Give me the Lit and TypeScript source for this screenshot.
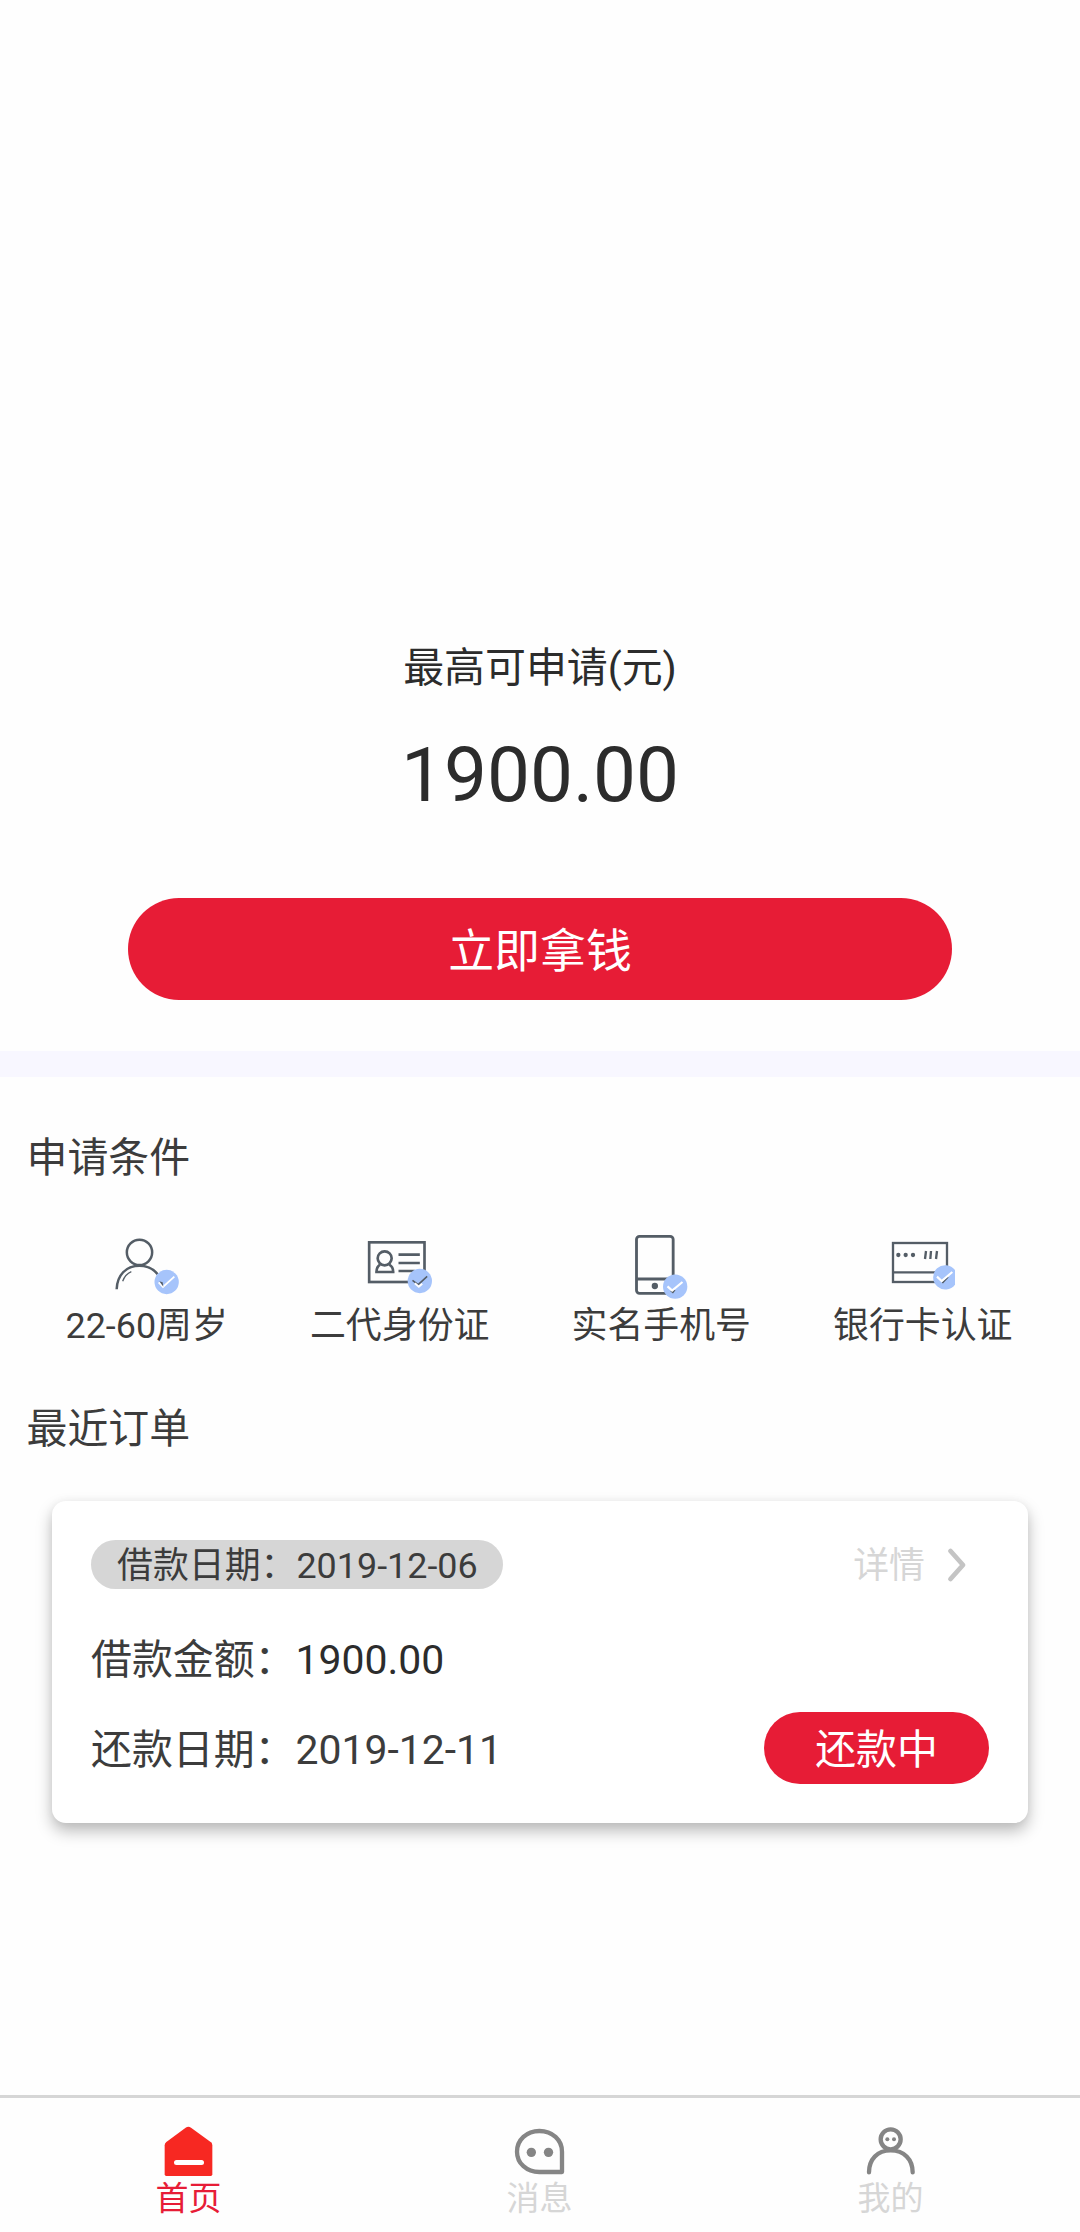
import { LitElement, html, svg, css, TemplateResult, SVGTemplateResult } from "lit";
import { customElement } from "lit/decorators.js";

const badge = (cx: number, cy: number) => svg`<circle cx=${cx} cy=${cy} r="36.5" fill="#a6c4fb"/>`;

interface Condition { label: string; box: string; art: SVGTemplateResult; }

const conditions: Condition[] = [
  {
    label: "22-60周岁",
    box: "21 30 240 210",
    art: svg`
      <g fill="none" stroke="#545d66" stroke-width="7.500">
        <circle cx="118.500" cy="97" r="38"/>
        <path d="M50 208C51 166 78 137 118 137C142 137 161 147 173 163"/>
        <path d="M68 184C73 170 82 160 94 155" stroke-width="4"/>
      </g>
      ${badge(200, 186)}
      <path d="M176 187L189 201L223 170" fill="none" stroke="#fff" stroke-width="5.500"/>
      <path d="M178 184L188 187L190 200Z" fill="#545d66"/>`,
  },
  {
    label: "二代身份证",
    box: "27.5 30 240 210",
    art: svg`
      <g fill="none" stroke="#545d66" stroke-width="8">
        <rect x="55" y="67" width="166" height="119"/>
        <circle cx="101.500" cy="115" r="21"/>
        <path d="M88 134C81 138 77 143 77 156H127C127 143 123 138 115 134"/>
        <path d="M143 104H207M143 129H207M143 153H192"/>
      </g>
      ${badge(207, 183)}
      <path d="M185 181L202 194L229 169" fill="none" stroke="#545d66" stroke-width="4.500"/>
      <path d="M192 190L204 200L214 191" fill="none" stroke="#fff" stroke-width="6"/>`,
  },
  {
    label: "实名手机号",
    box: "33.5 30 240 210",
    art: svg`
      <g fill="none" stroke="#545d66" stroke-width="8.500">
        <rect x="80" y="49" width="110" height="171" rx="9"/>
        <path d="M80 177H190"/>
      </g>
      <circle cx="135" cy="198" r="9.500" fill="#545d66"/>
      ${badge(196, 200)}
      <path d="M183 212L189 217L195 209" fill="none" stroke="#545d66" stroke-width="5"/>
      <path d="M173 199L187 212L218 186" fill="none" stroke="#fff" stroke-width="6.500"/>`,
  },
  {
    label: "银行卡认证",
    box: "39 30 240 210",
    art: svg`
      <g fill="none" stroke="#545d66" stroke-width="7">
        <rect x="69" y="69" width="162" height="117"/>
        <path d="M69 157H231"/>
        <path d="M168 93L165 117M183 93L181 117M201 93L198 117" stroke-width="7"/>
      </g>
      <g fill="#545d66"><circle cx="85" cy="105" r="6.500"/><circle cx="107" cy="105" r="6.500"/><circle cx="129" cy="105" r="6.500"/></g>
      <path d="M255 150A36.500 36.500 0 1 0 255 194Z" fill="#a6c4fb"/>
      <path d="M217 189L234 171" fill="none" stroke="#545d66" stroke-width="5"/>
      <path d="M201 170L215 183L247 156" fill="none" stroke="#fff" stroke-width="6.500"/>`,
  },
];

interface Tab { label: string; box: string; active: boolean; art: SVGTemplateResult; }

const tabs: Tab[] = [
  {
    label: "首页",
    box: "477 132 180 162",
    active: true,
    art: svg`
      <path d="M494 196Q494 190 499 186L557 143Q565 138 573 143L633 187Q637 190 637 196V283Q637 288 632 288H499Q494 288 494 283Z" fill="#f72822"/>
      <path d="M529.500 247.500H604.500" stroke="#fff" stroke-width="15" stroke-linecap="round"/>`,
  },
  {
    label: "消息",
    box: "150 132 180 162",
    active: false,
    art: svg`
      <path d="M238 153C277 153 306 180 306 215V276H238C200 276 171 250 171 215C171 180 200 153 238 153Z" fill="none" stroke="#858585" stroke-width="13" stroke-linejoin="round"/>
      <circle cx="214" cy="217" r="14" fill="#858585"/><circle cx="265.500" cy="217" r="14" fill="#858585"/>`,
  },
  {
    label: "我的",
    box: "1201 132 180 162",
    active: false,
    art: svg`
      <g fill="none" stroke="#858585" stroke-width="13" stroke-linecap="round">
        <circle cx="1290" cy="178" r="30"/>
        <path d="M1225 277C1225 238 1250 211 1290 211C1330 211 1356 238 1356 277"/>
      </g>
      <circle cx="1280" cy="178" r="6" fill="#858585"/><circle cx="1300" cy="178" r="6" fill="#858585"/>`,
  },
];

@customElement("app-root")
export class AppRoot extends LitElement {
  static styles = css`
    :host {
      display: flex;
      flex-direction: column;
      box-sizing: border-box;
      width: 1080px;
      height: 2232px;
      background: #fefefe;
      color: #3c3c3c;
      font-family: Roboto, "Noto Sans CJK SC", sans-serif;
      font-size: 40.9px;
      line-height: 60px;
      white-space: nowrap;
    }
    .hero {
      box-sizing: border-box;
      height: 1051px;
      padding-top: 638px;
      display: flex;
      flex-direction: column;
      align-items: center;
      flex: none;
      color: #2c2c2c;
    }
    .amount { margin-top: 32px; font-size: 76.5px; line-height: 90px; }
    .apply {
      margin-top: 78px;
      width: 824px;
      height: 102px;
      border-radius: 51px;
      background: #e71c36;
      color: #fff;
      font-size: 45.9px;
      line-height: 106px;
      text-align: center;
    }
    .band { flex: none; height: 26px; background: #f8f7ff; }
    .heading { padding-left: 26.5px; margin-top: 51px; }
    .conditions {
      display: flex;
      justify-content: space-between;
      padding: 0 67.5px 0 65.5px;
      margin-top: 42px;
    }
    .condition { display: flex; flex-direction: column; align-items: center; font-size: 35.9px; line-height: 50px; }
    .condition svg { width: 80px; height: 70px; display: block; margin-bottom: 1px; }
    .heading.orders { margin-top: 48px; }
    .card {
      box-sizing: border-box;
      margin: 42px 52px 0;
      height: 322px;
      padding: 39px 39px 38px;
      border-radius: 14px;
      background: #fff;
      box-shadow: 0 8px 16px rgba(0, 0, 0, 0.27), 0 0 10px rgba(0, 0, 0, 0.04);
    }
    .row { display: flex; align-items: center; justify-content: space-between; }
    .pill {
      height: 49px;
      padding: 0 25.5px 0 26px;
      border-radius: 25px;
      background: #d6d6d6;
      font-size: 35.9px;
      line-height: 53px;
    }
    .detail { display: flex; align-items: center; height: 49px; font-size: 35.9px; color: #d6d6d6; margin-right: 22px; }
    .detail span { padding-top: 4px; line-height: 49px; }
    .detail svg { width: 20px; height: 36px; margin-left: 22px; }
    .sum { margin-top: 41px; }
    .value { color: #2c2c2c; }
    .due { margin-top: 22px; }
    .date { padding-top: 3px; }
    .status {
      width: 225px;
      height: 72px;
      border-radius: 36px;
      background: #e71c36;
      color: #fff;
      line-height: 76px;
      text-align: center;
    }
    .tabs {
      box-sizing: border-box;
      margin-top: auto;
      height: 137px;
      padding: 26px 14px 0 13px;
      border-top: 3px solid #d6d6d6;
      display: flex;
    }
    .tab { flex: 1; display: flex; flex-direction: column; align-items: center; font-size: 33px; line-height: 42px; color: #d6d6d6; }
    .tab svg { width: 60px; height: 54px; display: block; }
    .tab.active { color: #e71c36; }
  `;

  render(): TemplateResult {
    return html`
      <section class="hero">
        <div>最高可申请(元)</div>
        <div class="amount">1900.00</div>
        <div class="apply">立即拿钱</div>
      </section>
      <div class="band"></div>
      <div class="heading">申请条件</div>
      <div class="conditions">
        ${conditions.map((c) => html`
          <div class="condition">
            <svg viewBox=${c.box}>${c.art}</svg>
            <span>${c.label}</span>
          </div>`)}
      </div>
      <div class="heading orders">最近订单</div>
      <section class="card">
        <div class="row">
          <div class="pill">借款日期：2019-12-06</div>
          <div class="detail">
            <span>详情</span>
            <svg viewBox="0 0 20 36"><path d="M3.500 4L16 18L3.500 32" fill="none" stroke="#c4c4c4" stroke-width="4.800" stroke-linecap="round" stroke-linejoin="round"/></svg>
          </div>
        </div>
        <div class="sum">借款金额：<span class="value">1900.00</span></div>
        <div class="row due">
          <span class="date">还款日期：2019-12-11</span>
          <div class="status">还款中</div>
        </div>
      </section>
      <nav class="tabs">
        ${tabs.map((t) => html`
          <div class="tab ${t.active ? "active" : ""}">
            <svg viewBox=${t.box}>${t.art}</svg>
            <span>${t.label}</span>
          </div>`)}
      </nav>
    `;
  }
}
